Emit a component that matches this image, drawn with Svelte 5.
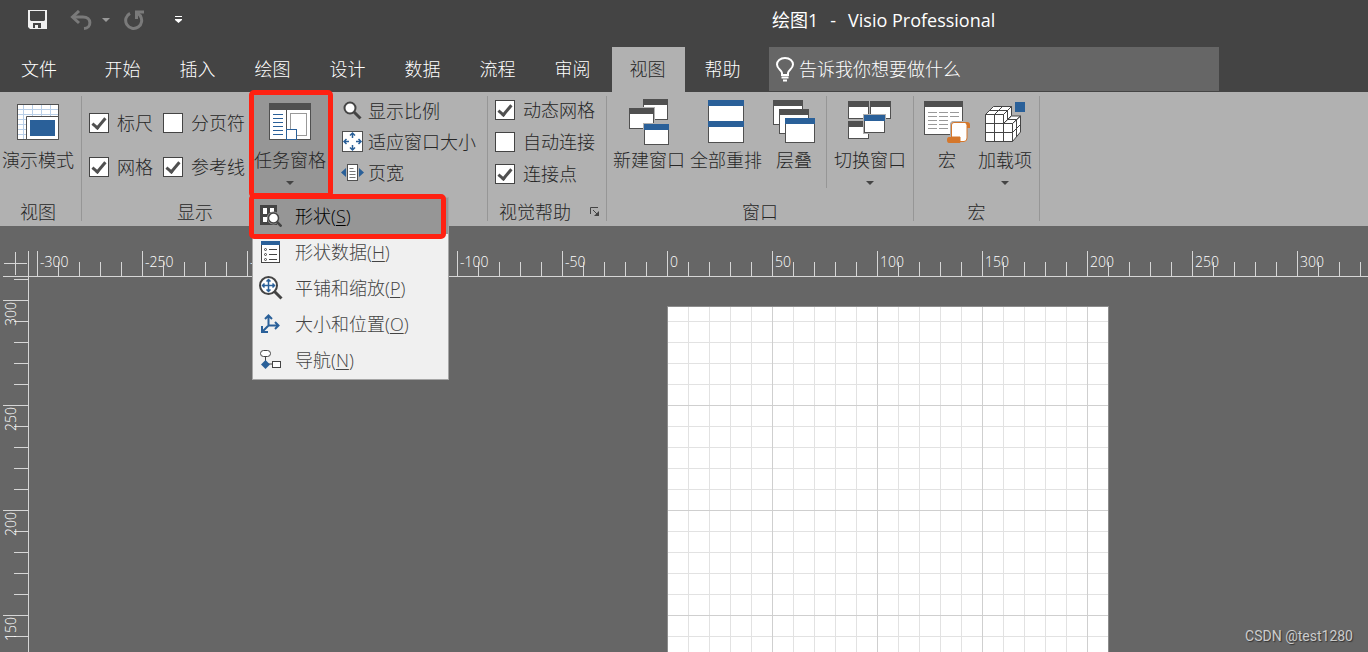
<script>
  const tabs = ['开始', '插入', '绘图', '设计', '数据', '流程', '审阅', '视图', '帮助'];
  let active = $state('视图');

  let rulers = $state([
    { label: '标尺', on: true },
    { label: '分页符', on: false },
    { label: '网格', on: true },
    { label: '参考线', on: true }
  ]);
  let aids = $state([
    { label: '动态网格', on: true },
    { label: '自动连接', on: false },
    { label: '连接点', on: true }
  ]);

  const panes = [
    { id: 'shapes', label: '形状', key: 'S' },
    { id: 'data', label: '形状数据', key: 'H' },
    { id: 'pan', label: '平铺和缩放', key: 'P' },
    { id: 'size', label: '大小和位置', key: 'O' },
    { id: 'nav', label: '导航', key: 'N' }
  ];

  // One tick every 10 units (21px), a labelled one every 50; as many as the rulers have room for.
  const step = 21;
  let rulerWidth = $state(0);
  let rulerHeight = $state(0);
  const across = $derived(Array.from({ length: Math.ceil(rulerWidth / step) }, (_, i) => -300 + i * 10));
  const down = $derived(Array.from({ length: Math.ceil(rulerHeight / step) }, (_, i) => 310 - i * 10));
</script>

{#snippet win(x, y, w, h, color)}
  <rect x={x + 0.5} y={y + 0.5} width={w - 1} height={h - 1} fill="#fff" stroke="#505050" />
  <rect {x} {y} width={w} height="6" fill={color} />
{/snippet}

{#snippet halo(x, y, w, h)}
  <rect x={x - 1} y={y - 1} width={w + 2} height={h + 2} fill="#b1b1b1" />
{/snippet}

{#snippet caret()}
  <svg class="caret" width="8" height="4" viewBox="0 0 8 4"><path d="M0 0h8L4 4z" fill="currentColor" /></svg>
{/snippet}

{#snippet check(item)}
  <label class="check">
    <input type="checkbox" bind:checked={item.on} />
    <span>{item.label}</span>
  </label>
{/snippet}

<div class="app">
  <header class="title">
    <div class="quick">
      <button aria-label="保存">
        <svg width="19" height="19" viewBox="0 0 19 19">
          <path d="M0 0h19v19H2L0 17z" fill="#f0f0f0" />
          <path d="M2 1h15v9l-1 1H3l-1-1z" fill="#444" />
          <path d="M5 13h8v5H5z" fill="#444" />
          <path d="M7 15h3v4H7z" fill="#f0f0f0" />
        </svg>
      </button>
      <button class="undo" aria-label="撤消">
        <svg width="22" height="20" viewBox="0 0 22 20" fill="none" stroke="#7a7a7a" stroke-width="3">
          <path d="M9 1L2.500 7 9 13" />
          <path d="M3 7h10c9 0 9 11 1 11.500" />
        </svg>
      </button>
      <button class="more" aria-label="撤消列表">{@render caret()}</button>
      <button class="redo" aria-label="重复">
        <svg width="20" height="20" viewBox="0 0 20 20" fill="none" stroke="#7a7a7a" stroke-width="3">
          <path d="M6 3.300A8 8 0 1 0 16 5.500" />
          <path d="M12.500 9V2H20" />
          <path d="M13 2.500l4 4" />
        </svg>
      </button>
      <button class="custom" aria-label="自定义快速访问工具栏">
        <svg width="8" height="8" viewBox="0 0 8 8" fill="#fff"><path d="M0 0h7v1H0zM0 3h7v1L3.500 7 0 4z" /></svg>
      </button>
    </div>
    <h1><span>绘图1</span><span>-</span><span>Visio Professional</span></h1>
  </header>

  <nav class="tabs">
    <button class="file">文件</button>
    {#each tabs as tab}
      <button class:active={tab === active} onclick={() => (active = tab)}>{tab}</button>
    {/each}
    <label class="tell">
      <svg width="18" height="25" viewBox="0 0 18 25" fill="none" stroke="#fff" stroke-width="2">
        <path d="M6 18v-2c0-3-5-4-5-8.500C1 4 4 1 9 1s8 3 8 6.500c0 4.500-5 5.500-5 8.500v2z" />
        <path d="M5.500 20.500h7M7 23.500h4" />
      </svg>
      <input type="text" placeholder="告诉我你想要做什么" aria-label="告诉我你想要做什么" />
    </label>
  </nav>

  <div class="ribbon">
    <section class="group view">
      <div class="body">
        <button class="large">
          <span class="icon">
            <svg width="42" height="36" viewBox="0 0 42 36">
              <rect x=".5" y=".5" width="41" height="35" fill="#fff" stroke="#505050" />
              <path d="M6.500 1v34M15.500 1v12M24.500 1v12M33.500 1v12M1 5.500h40M1 10.500h40M1 15.500h8M1 20.500h8M1 25.500h8M1 30.500h8" stroke="#b9cfe8" />
              <path d="M9.500 35.500v-23h32v23z" fill="#fff" stroke="#505050" />
              <path d="M13 16h25v16H13z" fill="#2a6099" />
            </svg>
          </span>
          演示模式
        </button>
      </div>
      <h2>视图</h2>
    </section>

    <section class="group show">
      <div class="body">
        <div class="checks two">
          {#each rulers as item}{@render check(item)}{/each}
        </div>
        <div class="dropdown">
          <button class="large open" aria-expanded="true">
            <span class="icon">
              <svg width="42" height="38" viewBox="0 0 42 38">
                <rect x=".5" y=".5" width="41" height="36" fill="#fff" stroke="#505050" />
                <path d="M0 0h42v7H0z" fill="#505050" />
                <path d="M17.500 7v29" stroke="#505050" />
                <path d="M4 11.500h10M4 15.500h10M4 19.500h10M4 23.500h10M4 27.500h10M4 31.500h10" stroke="#2a6099" />
                <rect x="21.500" y="10.500" width="16" height="22" fill="#fff" stroke="#999" />
                <rect x="17.500" y="26.500" width="10" height="10" fill="#fff" stroke="#2a6099" />
              </svg>
            </span>
            任务窗格
            {@render caret()}
          </button>
          <div class="menu" role="menu">
            {#each panes as pane, i}
              <button role="menuitem" class:hot={i === 0}>
                <span class="glyph">
                  {#if pane.id === 'shapes'}
                    <svg width="22" height="22" viewBox="0 0 22 22">
                      <path d="M0 0h17v20H0z" fill="#444" />
                      <path d="M3 3h4v6H3zM10 3h4v4h-4zM3 12h4v5H3z" fill="#fff" />
                      <circle cx="13.500" cy="13" r="6.500" fill="#969696" />
                      <path d="M17 17l4.500 4.500" stroke="#444" stroke-width="2.500" />
                      <circle cx="13.500" cy="13" r="5" fill="#fff" stroke="#444" stroke-width="1.500" />
                    </svg>
                  {:else if pane.id === 'data'}
                    <svg width="20" height="22" viewBox="0 0 20 22">
                      <rect x=".5" y=".5" width="18" height="21" fill="#fff" stroke="#444" />
                      <path d="M0 0h19v4H0z" fill="#2a6099" />
                      <path d="M8 8.500h8M8 13.500h8M8 18.500h8" stroke="#444" />
                      <g fill="#fff" stroke="#444"><circle cx="4.500" cy="8.500" r="1" /><circle cx="4.500" cy="13.500" r="1" /><circle cx="4.500" cy="18.500" r="1" /></g>
                    </svg>
                  {:else if pane.id === 'pan'}
                    <svg width="24" height="24" viewBox="0 0 24 24" fill="none">
                      <circle cx="9.500" cy="9.500" r="8.500" fill="#fff" stroke="#444" stroke-width="2" />
                      <path d="M15.500 15.500l7 7" stroke="#444" stroke-width="3" />
                      <path d="M9.500 4v11M4 9.500h11M7.500 5.500l2-2 2 2M7.500 13.500l2 2 2-2M5.500 7.500l-2 2 2 2M13.500 7.500l2 2-2 2" stroke="#2a6099" stroke-width="1.500" />
                    </svg>
                  {:else if pane.id === 'size'}
                    <svg width="20" height="20" viewBox="0 0 20 20" fill="none" stroke="#2a6099" stroke-width="2">
                      <path d="M7.500 1.500v10H17M7.500 11.500L2 17M4 5l3.500-3.500L11 5M14 8l3.500 3.500L14 15M1 12v6h6" />
                    </svg>
                  {:else}
                    <svg width="22" height="20" viewBox="0 0 22 20">
                      <path d="M5.500 6v8H13" fill="none" stroke="#444" />
                      <rect x=".5" y=".5" width="10" height="6" rx="3" fill="#fff" stroke="#444" />
                      <path d="M5.500 10l4.500 4.500L5.500 19 1 14.500z" fill="#2a6099" />
                      <rect x="12.500" y="11.500" width="8" height="6" fill="#fff" stroke="#444" />
                    </svg>
                  {/if}
                </span>
                <span>{pane.label}(<u>{pane.key}</u>)</span>
              </button>
            {/each}
          </div>
          <div class="mark mark-button"></div>
          <div class="mark mark-item"></div>
        </div>
      </div>
      <h2>显示</h2>
    </section>

    <section class="group zoom">
      <div class="body rows">
        <button class="small">
          <span class="glyph">
            <svg width="19" height="19" viewBox="0 0 19 19">
              <path d="M11 11l6.500 6.500" stroke="#444" stroke-width="3" />
              <circle cx="7" cy="7" r="5.500" fill="#fff" stroke="#444" stroke-width="2" />
            </svg>
          </span>显示比例
        </button>
        <button class="small">
          <span class="glyph">
            <svg width="21" height="21" viewBox="0 0 21 21" fill="none">
              <rect x=".5" y=".5" width="20" height="20" fill="#fff" stroke="#505050" />
              <path d="M10.500 2v5M10.500 14v5M2 10.500h5M14 10.500h5M8 4.500L10.500 2 13 4.500M8 16.500l2.500 2.500 2.500-2.500M4.500 8L2 10.500 4.500 13M16.500 8l2.500 2.500-2.500 2.500" stroke="#2a6099" stroke-width="1.500" />
            </svg>
          </span>适应窗口大小
        </button>
        <button class="small">
          <span class="glyph">
            <svg width="23" height="17" viewBox="0 0 23 17">
              <rect x="6.500" y=".5" width="10" height="16" fill="#fff" stroke="#505050" />
              <path d="M8.500 4.500h4M8.500 7.500h6M8.500 10.500h6M8.500 13.500h6" stroke="#777" />
              <path d="M5 4v9L0 8.500zM18 4v9l5-4.500z" fill="#2a6099" />
            </svg>
          </span>页宽
        </button>
      </div>
    </section>

    <section class="group aids">
      <div class="body">
        <div class="checks">
          {#each aids as item}{@render check(item)}{/each}
        </div>
      </div>
      <h2>
        视觉帮助
        <button class="launcher" aria-label="视觉帮助选项">
          <svg width="10" height="10" viewBox="0 0 10 10" fill="none" stroke="#444"><path d="M.5 7V.5H8M3 3l5 5" /><path d="M9 4v5H4z" fill="#444" stroke="none" /></svg>
        </button>
      </h2>
    </section>

    <section class="group windows">
      <div class="body">
        <button class="large">
          <span class="icon">
            <svg width="40" height="46" viewBox="0 0 40 46">
              {@render win(14, 0, 25, 21, '#505050')}
              {@render halo(0, 9, 25, 21)}
              {@render win(0, 9, 25, 21, '#505050')}
              {@render halo(15, 25, 25, 21)}
              {@render win(15, 25, 25, 21, '#2a6099')}
            </svg>
          </span>
          新建窗口
        </button>
        <button class="large">
          <span class="icon">
            <svg width="36" height="44" viewBox="0 0 36 44">
              {@render win(0, 0, 36, 22, '#2a6099')}
              {@render win(0, 21, 36, 22, '#2a6099')}
            </svg>
          </span>
          全部重排
        </button>
        <button class="large narrow">
          <span class="icon">
            <svg width="42" height="44" viewBox="0 0 42 44">
              {@render win(0, 0, 30, 25, '#505050')}
              {@render win(6, 9, 30, 25, '#505050')}
              {@render win(12, 18, 30, 25, '#2a6099')}
            </svg>
          </span>
          层叠
        </button>
        <button class="large divided">
          <span class="icon">
            <svg width="44" height="42" viewBox="0 0 44 42">
              {@render win(0, 0, 21, 18, '#505050')}
              {@render win(22, 0, 21, 18, '#505050')}
              {@render win(0, 20, 21, 18, '#505050')}
              {@render halo(16, 14, 21, 18)}
              {@render win(16, 14, 21, 18, '#2a6099')}
            </svg>
          </span>
          切换窗口
          {@render caret()}
        </button>
      </div>
      <h2>窗口</h2>
    </section>

    <section class="group macros">
      <div class="body">
        <button class="large narrow">
          <span class="icon">
            <svg width="46" height="42" viewBox="0 0 46 42">
              {@render win(0, 0, 39, 34, '#505050')}
              <path d="M4 11.500h9M15 11.500h9M26 11.500h9M4 15.500h9M15 15.500h9M26 15.500h9M4 19.500h9M15 19.500h9M4 23.500h9M15 23.500h9M4 27.500h9M15 27.500h9" stroke="#999" />
              <path d="M28 20h18v7h-3v14H23v-7h3V22z" fill="#b1b1b1" />
              <path d="M27.500 36V24q0-2.500 2.500-2.500h11q2 0 2 3V37q0 3.500-3 3.500h-4V36z" fill="#fff" stroke="#d5772b" />
              <path d="M30 21h13q3 0 3 3v3h-3v-3q0-2-2-2H30zM25 36h11v5q0 1 1 1H25q-2 0-2-3t2-3z" fill="#d5772b" />
            </svg>
          </span>
          宏
        </button>
        <button class="large narrow">
          <span class="icon">
            <svg width="40" height="40" viewBox="0 0 40 40">
              <g fill="#fff" stroke="#444" stroke-linejoin="round">
                <path d="M.5 12.500h18v9h9v18H.5z" />
                <path d="M.5 12.500l8-8h18l-8 8zM18.500 12.500l8-8v9l-8 8zM18.500 21.500l8-7.500h9l-8 7.500zM27.500 21.500l8-7.500v16l-8 9.500z" />
              </g>
              <path d="M9.500 12.500v27M18.500 21.500v18M.5 21.500h18M.5 30.500h27l8-8M9.500 12.500l8-8M4.500 8.500h18v9M22.500 17.500h9V35" fill="none" stroke="#444" />
              <path d="M30 0h10v10H30z" fill="#2a6099" />
            </svg>
          </span>
          加载项
          {@render caret()}
        </button>
      </div>
      <h2>宏</h2>
    </section>
  </div>

  <main class="workspace">
    <div class="corner"></div>
    <div class="ruler-x">
      <div class="ticks" bind:clientWidth={rulerWidth}>
        {#each across as n}
          <i class:major={n % 50 === 0}>{#if n % 50 === 0}<span>{n}</span>{/if}</i>
        {/each}
      </div>
    </div>
    <div class="ruler-y">
      <div class="ticks" bind:clientHeight={rulerHeight}>
        {#each down as n}
          <i class:major={n % 50 === 0}>{#if n % 50 === 0}<span>{n}</span>{/if}</i>
        {/each}
      </div>
    </div>
    <div class="canvas">
      <div class="page"></div>
      <p class="credit">CSDN @test1280</p>
    </div>
  </main>
</div>

<style>
  :global(body) {
    margin: 0;
  }
  .app {
    --text: #262626;
    --line: #d6d6d6;
    display: flex;
    flex-direction: column;
    height: 100vh;
    overflow: hidden;
    background: #666;
    color: var(--text);
    font: 300 18px/24px 'Open Sans', 'Noto Sans CJK SC', sans-serif;
  }
  button {
    padding: 0;
    border: 0;
    background: none;
    color: inherit;
    font: inherit;
    white-space: nowrap;
  }
  svg {
    display: block;
    flex: none;
  }
  h1,
  h2,
  p {
    margin: 0;
    font: inherit;
  }

  .title {
    display: flex;
    align-items: center;
    height: 39px;
    padding-bottom: 8px;
    background: #444;
    color: #fff;
  }
  .quick {
    display: flex;
    align-items: center;
    width: 744px;
    padding-left: 28px;
  }
  .undo {
    margin-left: 23px;
  }
  .more {
    margin-left: 10px;
    color: #999;
  }
  .redo {
    margin-left: 14px;
  }
  .custom {
    margin-left: 31px;
  }
  h1 {
    display: flex;
    gap: 12px;
    font-weight: 400;
  }

  .tabs {
    display: flex;
    gap: 2px;
    height: 45px;
    background: #444;
    color: #fff;
  }
  .tabs button {
    width: 73px;
    padding: 0 2px 2px 0;
  }
  .tabs .file {
    width: 80px;
    margin-right: 5px;
  }
  .tabs .active {
    background: #b1b1b1;
    color: var(--text);
  }
  .tell {
    display: flex;
    align-items: center;
    gap: 5px;
    flex: 0 1 436px;
    margin: 0 0 1px 7px;
    padding: 0 7px;
    background: #666;
  }
  .tell input {
    flex: 1;
    min-width: 0;
    padding: 0;
    border: 0;
    outline: 0;
    background: none;
    color: #fff;
    font: inherit;
  }
  .tell input::placeholder {
    color: #fff;
    opacity: 1;
  }

  .ribbon {
    display: flex;
    padding: 4px 0 5px;
    background: #b1b1b1;
  }
  .group {
    display: flex;
    flex-direction: column;
    justify-content: space-between;
    height: 125px;
    border-right: 1px solid #969696;
  }
  .body {
    display: flex;
  }
  h2 {
    display: flex;
    justify-content: center;
    align-items: center;
    height: 18px;
  }
  .large {
    display: flex;
    flex-direction: column;
    align-items: center;
    min-width: 72px;
    height: 92px;
  }
  .icon {
    display: flex;
    align-items: center;
    height: 52px;
  }
  .large .caret {
    margin-top: 9px;
    color: #444;
  }
  .narrow {
    min-width: 54px;
  }
  .small {
    display: flex;
    align-items: center;
    gap: 4px;
    height: 31px;
  }
  .glyph {
    display: flex;
    justify-content: center;
    align-items: center;
    width: 23px;
  }

  .check {
    display: flex;
    align-items: center;
    gap: 8px;
    height: 20px;
    white-space: nowrap;
  }
  .check input {
    appearance: none;
    display: grid;
    place-items: center;
    width: 20px;
    height: 20px;
    margin: 0;
    border: 1px solid #444;
    background: #fff;
  }
  .check input:checked::before {
    content: '';
    width: 5px;
    height: 11px;
    margin: -3px 0 0;
    border: solid #505050;
    border-width: 0 3px 3px 0;
    transform: rotate(40deg);
  }
  .checks {
    display: grid;
    gap: 12px;
    padding: 4px 0 0 7px;
  }
  .checks.two {
    grid-template-columns: auto auto;
    gap: 24px 10px;
    padding: 17px 7px 0;
    align-content: start;
  }

  .view {
    width: 81px;
  }
  .view .large {
    width: 76px;
  }
  .view h2 {
    padding-right: 5px;
  }
  .show {
    border-right: 0;
  }
  .show h2 {
    padding-right: 20px;
  }
  .dropdown {
    position: relative;
    margin-top: -4px;
  }
  .open {
    width: 76px;
    height: 104px;
    padding-top: 4px;
    background: #969696;
  }

  .menu {
    position: absolute;
    top: 105px;
    left: 0;
    z-index: 2;
    width: 195px;
    padding-bottom: 1px;
    border: 1px solid #a6a6a6;
    background: #f0f0f0;
    color: #444;
  }
  .menu button {
    display: flex;
    align-items: center;
    gap: 12px;
    width: 100%;
    height: 36px;
    padding-left: 6px;
  }
  .menu .glyph {
    width: 24px;
  }
  .menu .hot {
    background: #969696;
    color: #000;
  }
  u {
    text-underline-offset: 2px;
    text-decoration-thickness: 1px;
  }
  .mark {
    position: absolute;
    z-index: 3;
    box-sizing: border-box;
    border: 5px solid #ff2112;
    border-radius: 5px;
    pointer-events: none;
  }
  .mark-button {
    inset: -2px -5px -2px -3px;
  }
  .mark-item {
    top: 102px;
    left: -3px;
    width: 197px;
    height: 45px;
  }

  .zoom {
    padding: 0 11px 0 13px;
  }
  .rows {
    flex-direction: column;
    margin-top: -1px;
  }
  .aids {
    width: 118px;
  }
  .aids h2 {
    justify-content: space-between;
    padding: 0 6px 0 11px;
  }
  .windows .body {
    gap: 5px;
    padding: 0 7px 0 6px;
  }
  .divided {
    padding-left: 7px;
    border-left: 1px solid #969696;
  }
  .macros .body {
    gap: 4px;
    padding: 0 7px 0 6px;
  }

  .workspace {
    display: grid;
    grid-template: 51px minmax(0, 1fr) / 29px minmax(0, 1fr);
    flex: 1;
    min-height: 0;
    color: #fff;
    font-size: 14px;
    line-height: 16px;
  }
  .corner {
    margin: 25px 0 0 3px;
    border: solid var(--line);
    border-width: 0 1px 1px 0;
    background:
      linear-gradient(var(--line), var(--line)) 1px 12px / 23px 1px no-repeat,
      linear-gradient(var(--line), var(--line)) 12px 1px / 1px 23px no-repeat;
  }
  .ruler-x,
  .ruler-y,
  .ticks {
    display: flex;
    overflow: hidden;
  }
  .ticks {
    flex: 1;
    align-items: flex-end;
  }
  .ruler-x {
    padding-left: 8px;
    border-bottom: 1px solid var(--line);
  }
  .ruler-y {
    padding-top: 2px;
    border-right: 1px solid var(--line);
  }
  .ruler-y .ticks {
    flex-direction: column;
  }
  i {
    flex: none;
    box-sizing: border-box;
    font-style: normal;
  }
  .ruler-x i {
    width: 21px;
    height: 14px;
    border-left: 1px solid var(--line);
  }
  .ruler-x .major {
    height: 25px;
    padding: 3px 0 0 2px;
    white-space: nowrap;
  }
  .ruler-y i {
    width: 14px;
    height: 21px;
    border-top: 1px solid var(--line);
  }
  .ruler-y .major {
    width: 25px;
    padding-top: 1px;
  }
  .ruler-y span {
    display: block;
    width: 16px;
    writing-mode: vertical-rl;
    transform: rotate(180deg);
  }
  .canvas {
    position: relative;
    display: flex;
    padding: 29px 0 0 638px;
    overflow: hidden;
  }
  .page {
    box-sizing: border-box;
    width: 442px;
    border: solid #8c8c8c;
    border-width: 1px 1px 0;
    background:
      repeating-linear-gradient(90deg, transparent 0 104px, #cfcfcf 104px 105px),
      repeating-linear-gradient(transparent 0 104px, #cfcfcf 104px 105px) 0 -6px / 100% 1050px,
      repeating-linear-gradient(90deg, transparent 0 20px, #e2e2e2 20px 21px),
      repeating-linear-gradient(transparent 0 20px, #e2e2e2 20px 21px) 0 -6px / 100% 1050px,
      #fff;
  }
  .credit {
    position: absolute;
    right: 15px;
    bottom: 8px;
    color: #ccc;
    font: 14px/16px Roboto, sans-serif;
    text-shadow: 1px 1px 1px #333;
  }
</style>
